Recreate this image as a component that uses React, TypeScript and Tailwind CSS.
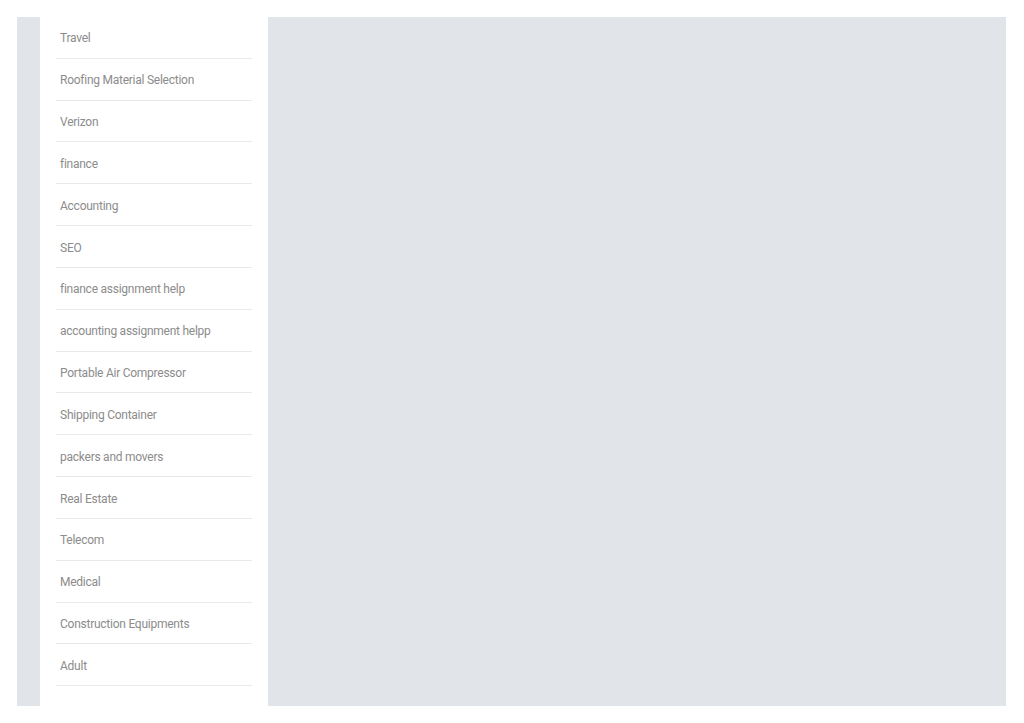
import React from "react";

const items = [
  "Travel",
  "Roofing Material Selection",
  "Verizon",
  "finance",
  "Accounting",
  "SEO",
  "finance assignment help",
  "accounting assignment helpp",
  "Portable Air Compressor",
  "Shipping Container",
  "packers and movers",
  "Real Estate",
  "Telecom",
  "Medical",
  "Construction Equipments",
  "Adult",
];

export default function App() {
  return (
    <div className="w-[1024px] h-[723px] bg-white pt-[17px] pl-[17px]" style={{ fontFamily: "Roboto, 'Liberation Sans', sans-serif" }}>
      <div className="w-[989px] h-[689px] bg-[#e1e5ea] flex pl-[23px]">
        <aside className="w-[228px] h-full bg-white px-[16px]">
          <ul>
            {items.map((t) => (
              <li key={t} className="h-[41.83px] border-b border-[#e9e9e9] flex items-center pl-[4px] pt-[2px] text-[12px] tracking-[-0.25px] text-[#8c8c8c]">
                {t}
              </li>
            ))}
          </ul>
        </aside>
        <main className="flex-1" />
      </div>
    </div>
  );
}
